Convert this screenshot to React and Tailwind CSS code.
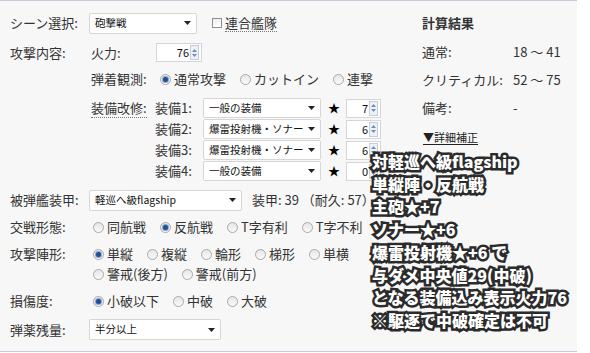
import React from "react";

function Caret() {
  return (
    <svg width="7" height="4" viewBox="0 0 7 4" className="shrink-0">
      <path d="M0 0 L7 0 L3.5 4 Z" fill="#222" />
    </svg>
  );
}

function Select({ cls, text }) {
  return (
    <div className={`${cls} bg-white border border-[#d6d6d6] rounded-[2px] flex items-center pl-[5px] pr-[5px] text-[10.5px] text-[#111] leading-none`}>
      <span className="flex-1 whitespace-nowrap">{text}</span>
      <Caret />
    </div>
  );
}

function Num({ cls, v }) {
  return (
    <div className={`${cls} h-[19px] bg-white border border-[#d6d6d6] flex items-center justify-end pr-[2px] text-[11px] text-[#111] leading-none`}>
      <span>{v}</span>
      <span className="ml-[1px] w-[9px] h-[15px] border border-[#c3cddb] bg-[#eef2f8] flex flex-col items-center justify-center gap-[2px]">
        <svg width="5" height="3" viewBox="0 0 5 3"><path d="M0 3 L5 3 L2.5 0 Z" fill="#6f8fb8" /></svg>
        <svg width="5" height="3" viewBox="0 0 5 3"><path d="M0 0 L5 0 L2.5 3 Z" fill="#6f8fb8" /></svg>
      </span>
    </div>
  );
}

function Radio({ checked, label }) {
  return (
    <span className="inline-flex items-center">
      <span className="ml-[4px] mr-[3px] w-[11px] h-[11px] rounded-full border border-[#a9a9a9] bg-[linear-gradient(#e6e6e6,#fafafa)] flex items-center justify-center">
        {checked && <span className="w-[5px] h-[5px] rounded-full bg-[#234f8f] ring-[1px] ring-[#7fa6d6]" />}
      </span>
      <span>{label}</span>
    </span>
  );
}

function Label({ children }) {
  return <div className="w-[79px] shrink-0">{children}</div>;
}

const overlay = [
  "対軽巡へ級flagship",
  "単縦陣・反航戦",
  "主砲★+7",
  "ソナー★+6",
  "爆雷投射機★+6 で",
  "与ダメ中央値29(中破)",
  "となる装備込み表示火力76",
  "※駆逐で中破確定は不可",
];

export default function App() {
  return (
    <div className="w-[590px] h-[353px] bg-white flex [font-family:'Noto_Sans_CJK_JP','Noto_Sans',sans-serif] text-[13px] text-[#333]">
      <div className="relative w-[577px] h-[352px] bg-[#f7f7f7] border-t border-b border-[#c6ccd8] flex overflow-hidden">
        {/* left column */}
        <div className="w-[422px] pl-[10px] pt-[11px] flex flex-col">
          {/* row 1 */}
          <div className="h-[22px] flex items-center">
            <Label>シーン選択:</Label>
            <Select cls="w-[108px] h-[21px]" text="砲撃戦" />
            <span className="ml-[15px] w-[10px] h-[10px] border border-[#8f8f8f] bg-[linear-gradient(#eeeeee,#ffffff)]" />
            <span className="ml-[3px] border-b border-dotted border-[#777] leading-[17px]">連合艦隊</span>
          </div>

          {/* 攻撃内容 */}
          <div className="mt-[8px] flex">
            <Label>
              <div className="h-[21px] flex items-center">攻撃内容:</div>
            </Label>
            <div className="flex flex-col">
              <div className="h-[21px] flex items-center">
                <div className="w-[67px] pl-[2px]">火力:</div>
                <Num cls="w-[46px]" v="76" />
              </div>
              <div className="mt-[6px] h-[20px] flex items-center">
                <div className="w-[67px] pl-[2px]">弾着観測:</div>
                <div className="flex items-center gap-[10px]">
                  <Radio checked label="通常攻撃" />
                  <Radio label="カットイン" />
                  <Radio label="連撃" />
                </div>
              </div>
              <div className="mt-[9px] flex">
                <div className="w-[66px] pl-[2px] h-[20px] flex items-center">
                  <span className="border-b border-dotted border-[#777] leading-[18px]">装備改修:</span>
                </div>
                <div className="flex flex-col gap-[1px]">
                  {[
                    ["装備1:", "一般の装備", "7"],
                    ["装備2:", "爆雷投射機・ソナー", "6"],
                    ["装備3:", "爆雷投射機・ソナー", "6"],
                    ["装備4:", "一般の装備", "0"],
                  ].map(([l, s, n]) => (
                    <div key={l} className="h-[20px] flex items-center">
                      <div className="w-[48px]">{l}</div>
                      <Select cls="w-[118px] h-[20px]" text={s} />
                      <span className="ml-[7px] mr-[6px] text-[12px] text-black">★</span>
                      <Num cls="w-[35px]" v={n} />
                    </div>
                  ))}
                </div>
              </div>
            </div>
          </div>

          {/* 被弾艦装甲 */}
          <div className="mt-[9px] h-[20px] flex items-center">
            <Label>被弾艦装甲:</Label>
            <Select cls="w-[153px] h-[21px]" text="軽巡へ級flagship" />
            <span className="ml-[10px] whitespace-nowrap">装甲: 39 （耐久: 57）</span>
          </div>

          {/* 交戦形態 */}
          <div className="mt-[7px] h-[20px] flex items-center">
            <Label>交戦形態:</Label>
            <div className="flex items-center gap-[10px]">
              <Radio label="同航戦" />
              <Radio checked label="反航戦" />
              <Radio label="T字有利" />
              <Radio label="T字不利" />
            </div>
          </div>

          {/* 攻撃陣形 */}
          <div className="mt-[7px] flex">
            <Label>
              <div className="h-[20px] flex items-center">攻撃陣形:</div>
            </Label>
            <div className="flex flex-col">
              <div className="h-[20px] flex items-center gap-[10px]">
                <Radio checked label="単縦" />
                <Radio label="複縦" />
                <Radio label="輪形" />
                <Radio label="梯形" />
                <Radio label="単横" />
              </div>
              <div className="h-[20px] flex items-center gap-[10px]">
                <Radio label="警戒(後方)" />
                <Radio label="警戒(前方)" />
              </div>
            </div>
          </div>

          {/* 損傷度 */}
          <div className="mt-[7px] h-[20px] flex items-center">
            <Label>損傷度:</Label>
            <div className="flex items-center gap-[10px]">
              <Radio checked label="小破以下" />
              <Radio label="中破" />
              <Radio label="大破" />
            </div>
          </div>

          {/* 弾薬残量 */}
          <div className="mt-[8px] h-[21px] flex items-center">
            <Label>弾薬残量:</Label>
            <Select cls="w-[132px] h-[21px]" text="半分以上" />
          </div>
        </div>

        {/* right column */}
        <div className="flex-1 pt-[11px] flex flex-col">
          <div className="h-[22px] flex items-center font-bold">計算結果</div>
          <div className="mt-[4px] h-[28px] flex items-center">
            <span className="w-[91px]">通常:</span>
            <span>18 ～ 41</span>
          </div>
          <div className="h-[28px] flex items-center">
            <span className="w-[91px]">クリティカル:</span>
            <span>52 ～ 75</span>
          </div>
          <div className="h-[28px] flex items-center">
            <span className="w-[91px]">備考:</span>
            <span>-</span>
          </div>
          <div className="mt-[1px] h-[28px] flex items-center pl-[1px]">
            <span className="text-[11px] text-[#222] underline underline-offset-2">▼詳細補正</span>
          </div>
        </div>

        {/* overlay annotation */}
        <div className="absolute left-[372px] top-[149px] flex flex-col text-[16px] font-black text-white leading-[22.7px] whitespace-nowrap [-webkit-text-stroke:5px_#2b2b2b] [paint-order:stroke_fill]">
          {overlay.map((t) => (
            <span key={t}>{t}</span>
          ))}
        </div>
      </div>
    </div>
  );
}
